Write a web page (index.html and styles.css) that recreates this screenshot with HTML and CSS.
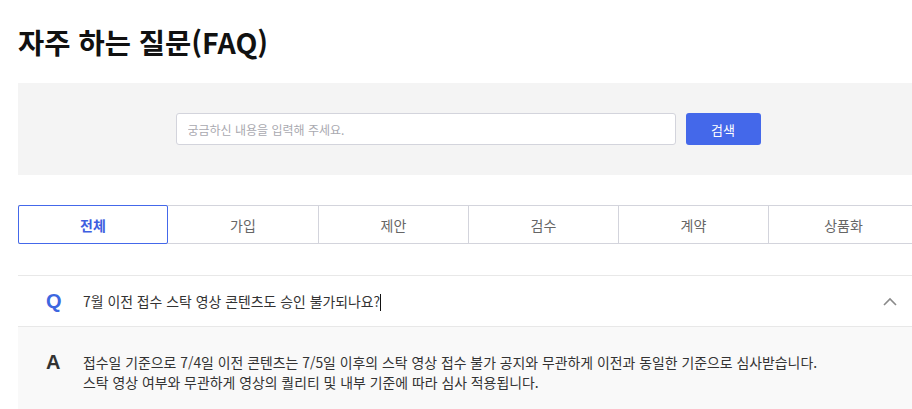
FILE: index.html
```html
<!DOCTYPE html>
<html lang="ko">
<head>
<meta charset="utf-8">
<title>자주 하는 질문(FAQ)</title>
<link rel="stylesheet" href="styles.css">
</head>
<body>
<div class="page">
  <h1 class="title">자주 하는 질문(FAQ)</h1>
  <div class="search">
    <input class="search-input" type="text" placeholder="궁금하신 내용을 입력해 주세요.">
    <button class="search-btn" type="button">검색</button>
  </div>
  <div class="tabs">
    <div class="tab active">전체</div>
    <div class="tab">가입</div>
    <div class="tab">제안</div>
    <div class="tab">검수</div>
    <div class="tab">계약</div>
    <div class="tab">상품화</div>
  </div>
  <div class="faq">
    <div class="q-row">
      <span class="mark q">Q</span>
      <span class="q-text">7월 이전 접수 스탁 영상 콘텐츠도 승인 불가되나요?<span class="caret"></span></span>
      <svg class="chev" width="14" height="9" viewBox="0 0 14 9"><path d="M1 8 L7 2 L13 8" fill="none" stroke="#8a8a8a" stroke-width="1.6"/></svg>
    </div>
    <div class="a-row">
      <span class="mark a">A</span>
      <p class="a-text">접수일 기준으로 7/4일 이전 콘텐츠는 7/5일 이후의 스탁 영상 접수 불가 공지와 무관하게 이전과 동일한 기준으로 심사받습니다.<br>스탁 영상 여부와 무관하게 영상의 퀄리티 및 내부 기준에 따라 심사 적용됩니다.</p>
    </div>
  </div>
</div>
</body>
</html>
```

FILE: styles.css
```css
html, body {
  margin: 0;
  padding: 0;
  overflow: hidden;
  background: #fff;
}
body {
  font-family: "Noto Sans CJK KR", "Noto Sans", sans-serif;
  color: #333;
}
.page {
  width: 900px;
  margin-left: 18px;
  padding-top: 22px;
}
.title {
  margin: 0;
  font-size: 28.5px;
  line-height: 40px;
  font-weight: 700;
  color: #111;
}
.search {
  margin-top: 21px;
  height: 92px;
  background: #f4f4f4;
  display: flex;
  align-items: center;
  justify-content: center;
  gap: 10px;
}
.search-input {
  box-sizing: border-box;
  width: 500px;
  height: 32px;
  border: 1px solid #d3d4dc;
  border-radius: 3px;
  background: #fff;
  padding: 0 11px;
  font-family: inherit;
  font-size: 12px;
  color: #333;
  outline: none;
}
.search-input::placeholder {
  color: #a9a9b0;
}
.search-btn {
  width: 75px;
  height: 32px;
  border: 0;
  border-radius: 3px;
  background: #4468ea;
  color: #fff;
  font-family: inherit;
  font-size: 13px;
  padding: 0;
}
.tabs {
  margin-top: 30px;
  display: grid;
  grid-template-columns: repeat(6, 150px);
  border-top: 1px solid #d3d4dc;
  border-bottom: 1px solid #d3d4dc;
}
.tab {
  height: 37px;
  display: flex;
  align-items: center;
  justify-content: center;
  font-size: 14px;
  color: #666;
  border-left: 1px solid #d3d4dc;
}
.tab:first-child {
  border-left: 0;
}
.tab.active {
  margin: -1px 0;
  height: 37px;
  border: 1px solid #4468ea;
  border-radius: 2px;
  color: #3e5fe0;
  font-weight: 700;
}
.tab.active + .tab {
  border-left: 0;
}
.faq {
  margin-top: 31px;
  border-top: 1px solid #e8e8e8;
}
.q-row {
  height: 50px;
  display: flex;
  align-items: center;
  padding-left: 28px;
  padding-right: 21px;
  border-bottom: 1px solid #e8e8e8;
}
.mark {
  width: 37px;
  flex: none;
  font-family: "Liberation Sans", Arial, sans-serif;
  font-weight: 700;
  font-size: 20px;
}
.mark.q {
  color: #3d67e0;
}
.mark.a {
  color: #333;
  align-self: flex-start;
  line-height: 20px;
}
.q-text {
  flex: 1;
  font-size: 13.9px;
  color: #333;
}
.caret {
  display: inline-block;
  width: 1px;
  height: 17px;
  background: #111;
  vertical-align: -4px;
}
.chev {
  flex: none;
}
.a-row {
  display: flex;
  background: #f9f9f9;
  padding: 25px 28px 26px;
}
.a-text {
  margin: 0;
  font-size: 13.9px;
  line-height: 20px;
  color: #333;
}
```
